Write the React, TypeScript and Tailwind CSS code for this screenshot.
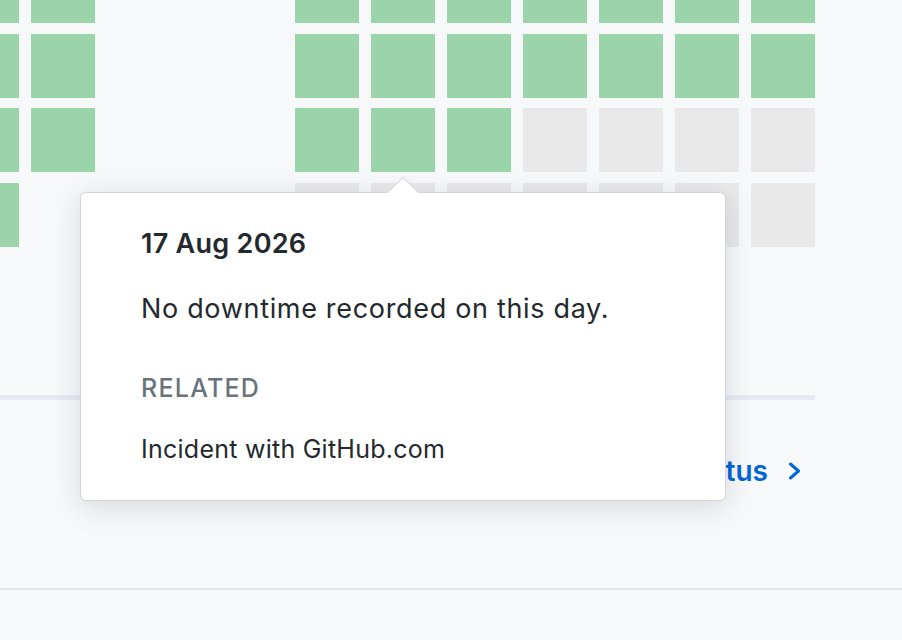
import React from "react";

type Cell = "g" | "e" | null;

const G: Cell[] = ["g", "g", "g", "g", "g", "g", "g"];
const E: Cell[] = ["e", "e", "e", "e", "e", "e", "e"];

const prevMonth: Cell[][] = [G, G, G, ["g", "g", "g", "g", "g", "g", null]];
const thisMonth: Cell[][] = [G, G, ["g", "g", "g", "e", "e", "e", "e"], E];

function MonthGrid({ rows }: { rows: Cell[][] }) {
  return (
    <div className="grid shrink-0 grid-cols-[repeat(7,64px)] auto-rows-[64px] gap-x-[12px] gap-y-[10.67px]">
      {rows.flat().map((c, i) =>
        c === null ? (
          <div key={i} />
        ) : (
          <div key={i} className={c === "g" ? "bg-[#9bd4a8]" : "bg-[#e9e9ea]"} />
        )
      )}
    </div>
  );
}

function Tooltip() {
  return (
    <div className="absolute left-[80px] top-[192px] h-[309px] w-[646px] rounded-[6px] border border-[#d3d5d8] bg-white px-[60px] pt-[35px] text-[#24292e] shadow-[0_6px_28px_rgba(27,31,35,0.14)]">
      {/* arrow */}
      <div className="absolute left-[311px] top-[-12px] h-[22px] w-[22px] rotate-45 border-l border-t border-[#d3d5d8] bg-white" />
      <div className="relative">
        <p className="text-[27px] font-semibold leading-[32px] tracking-[0.01em]">17 Aug 2026</p>
        <p className="mt-[33px] text-[27px] leading-[32px] tracking-[0.025em]">No downtime recorded on this day.</p>
        <p className="mt-[47px] text-[25px] font-medium uppercase leading-[32px] tracking-[0.05em] text-[#6a737d]">
          Related
        </p>
        <p className="mt-[29px] text-[25px] leading-[32px] tracking-[0.01em]">Incident with GitHub.com</p>
      </div>
    </div>
  );
}

export default function App() {
  return (
    <div className="relative h-[640px] w-[902px] overflow-hidden bg-[#f6f8fa] font-['Inter','Noto_Sans',sans-serif]">
      <div className="w-[815px]">
        <div className="-ml-[425px] -mt-[41px] flex gap-[200px]">
          <MonthGrid rows={prevMonth} />
          <MonthGrid rows={thisMonth} />
        </div>
        <div className="mt-[148px] h-[5px] bg-[#e6ebf1]" />
        <div className="mt-[53px] flex h-[36px] items-center justify-end gap-[20px] pr-[13px]">
          <a className="text-[28px] font-semibold leading-[36px] text-[#0366d6]">Current status</a>
          <svg width="14" height="18" viewBox="0 0 14 18" fill="none">
            <path d="M2.5 2l8 7-8 7" stroke="#0366d6" strokeWidth="3" strokeLinecap="round" strokeLinejoin="round" />
          </svg>
        </div>
      </div>
      <div className="mt-[99px] h-[2px] bg-[#e1e4e8]" />
      <Tooltip />
    </div>
  );
}
